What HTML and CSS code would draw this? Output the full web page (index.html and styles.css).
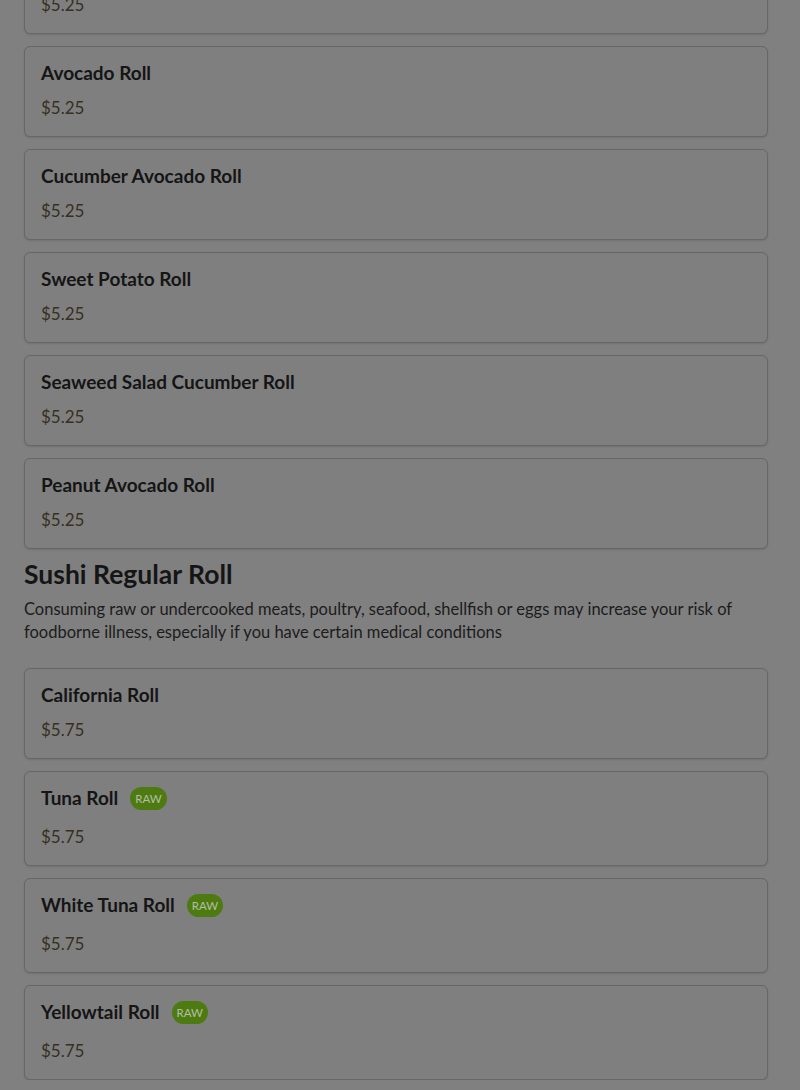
FILE: index.html
```html
<!DOCTYPE html>
<html>
<head>
<meta charset="utf-8">
<link rel="stylesheet" href="styles.css">
</head>
<body>
<main class="menu">
  <div class="items">
    <div class="card"><div class="title-row"><span class="name">Asparagus Roll</span></div><div class="price">$5.25</div></div>
    <div class="card"><div class="title-row"><span class="name">Avocado Roll</span></div><div class="price">$5.25</div></div>
    <div class="card"><div class="title-row"><span class="name">Cucumber Avocado Roll</span></div><div class="price">$5.25</div></div>
    <div class="card"><div class="title-row"><span class="name">Sweet Potato Roll</span></div><div class="price">$5.25</div></div>
    <div class="card"><div class="title-row"><span class="name">Seaweed Salad Cucumber Roll</span></div><div class="price">$5.25</div></div>
    <div class="card"><div class="title-row"><span class="name">Peanut Avocado Roll</span></div><div class="price">$5.25</div></div>
  </div>
  <section class="section">
    <h2 class="section-title">Sushi Regular Roll</h2>
    <p class="section-desc">Consuming raw or undercooked meats, poultry, seafood, shellfish or eggs may increase your risk of foodborne illness, especially if you have certain medical conditions</p>
    <div class="items">
      <div class="card"><div class="title-row"><span class="name">California Roll</span></div><div class="price">$5.75</div></div>
      <div class="card raw"><div class="title-row"><span class="name">Tuna Roll</span><span class="badge">RAW</span></div><div class="price">$5.75</div></div>
      <div class="card raw"><div class="title-row"><span class="name">White Tuna Roll</span><span class="badge">RAW</span></div><div class="price">$5.75</div></div>
      <div class="card raw"><div class="title-row"><span class="name">Yellowtail Roll</span><span class="badge">RAW</span></div><div class="price">$5.75</div></div>
    </div>
  </section>
</main>
</body>
</html>
```
FILE: styles.css
```css
html, body {
  margin: 0;
  padding: 0;
  background: #808080;
}
body {
  font-family: "Lato", "Open Sans", sans-serif;
  color: #161616;
  overflow: hidden;
}
.menu {
  padding: 0 32px 0 24px;
  margin-top: -57px;
}
.items {
  display: flex;
  flex-direction: column;
  gap: 12px;
}
.card {
  background: #7f7f7f;
  border: 1px solid #676767;
  border-radius: 6px;
  padding: 14px 16px 16px;
  box-shadow: 0 1px 2px rgba(0,0,0,0.12);
}
.title-row {
  display: flex;
  align-items: center;
  gap: 12px;
  height: 24px;
  margin-bottom: 11px;
}
.card.raw .title-row {
  margin-bottom: 15px;
}
.name {
  font-size: 19px;
  font-weight: 700;
  line-height: 24px;
  color: #151515;
}
.badge {
  background: #4e7a12;
  color: #b3bea3;
  font-size: 11.5px;
  line-height: 23px;
  height: 23px;
  padding: 0 5px;
  border-radius: 12px;
}
.price {
  font-size: 17px;
  line-height: 24px;
  color: #363022;
}
.section {
  margin-top: 10px;
}
.section-title {
  margin: 0;
  font-size: 26.5px;
  line-height: 30px;
  font-weight: 700;
  color: #151515;
}
.section-desc {
  margin: 9px 0 24px;
  font-size: 16.5px;
  line-height: 23px;
  color: #1c1c1c;
}
```
